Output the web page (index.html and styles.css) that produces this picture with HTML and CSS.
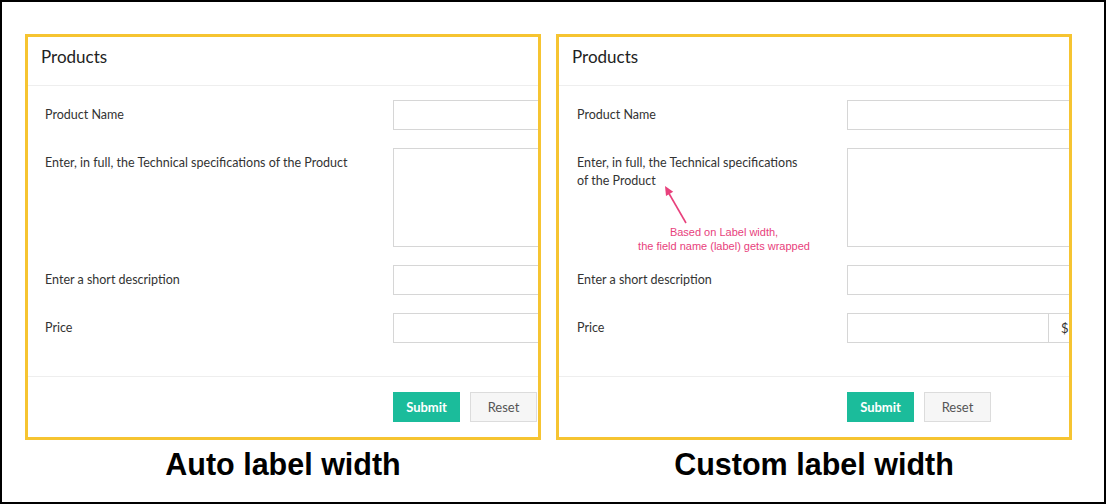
FILE: index.html
```html
<!DOCTYPE html>
<html>
<head>
<meta charset="utf-8">
<link rel="stylesheet" href="styles.css">
</head>
<body>
<div class="frame">
  <div class="column">
    <div class="panel">
      <div class="panel-head">Products</div>
      <div class="panel-body auto">
        <div class="row">
          <div class="label">Product Name</div>
          <div class="field"><div class="input"></div></div>
        </div>
        <div class="row">
          <div class="label">Enter, in full, the Technical specifications of the Product</div>
          <div class="field"><div class="input textarea"></div></div>
        </div>
        <div class="row">
          <div class="label">Enter a short description</div>
          <div class="field"><div class="input"></div></div>
        </div>
        <div class="row">
          <div class="label">Price</div>
          <div class="field"><div class="input"></div></div>
        </div>
      </div>
      <div class="panel-foot auto">
        <button class="btn submit">Submit</button>
        <button class="btn reset">Reset</button>
      </div>
    </div>
    <div class="caption">Auto label width</div>
  </div>

  <div class="column">
    <div class="panel">
      <div class="panel-head">Products</div>
      <div class="panel-body custom">
        <div class="row">
          <div class="label">Product Name</div>
          <div class="field"><div class="input"></div></div>
        </div>
        <div class="row">
          <div class="label">Enter, in full, the Technical specifications of the Product</div>
          <div class="field"><div class="input textarea"></div></div>
        </div>
        <div class="row">
          <div class="label">Enter a short description</div>
          <div class="field"><div class="input"></div></div>
        </div>
        <div class="row">
          <div class="label">Price</div>
          <div class="field">
            <div class="group">
              <div class="input price"></div>
              <div class="addon">$</div>
            </div>
          </div>
        </div>
      </div>
      <div class="panel-foot custom">
        <button class="btn submit">Submit</button>
        <button class="btn reset">Reset</button>
      </div>
      <svg class="arrow" width="40" height="50" viewBox="0 0 40 50">
        <line x1="33" y1="44" x2="16" y2="14.5" stroke="#e8417c" stroke-width="1.6"/>
        <polygon points="12,7 20.2,12.7 13,17" fill="#e8417c"/>
      </svg>
      <div class="note">Based on Label width,<br>the field name (label) gets wrapped</div>
    </div>
    <div class="caption">Custom label width</div>
  </div>
</div>
</body>
</html>
```

FILE: styles.css
```css
* { box-sizing: border-box; }
html, body { margin: 0; padding: 0; background: #fff; }
body { font-family: "Lato", "Liberation Sans", sans-serif; color: #333; }

.frame {
  width: 1106px;
  height: 504px;
  border: 2px solid #000;
  display: flex;
  gap: 15px;
  padding: 32px 0 0 23px;
}

.column {
  display: flex;
  flex-direction: column;
  align-items: center;
}

.panel {
  position: relative;
  width: 516px;
  height: 406px;
  border: 3px solid #f6c431;
  overflow: hidden;
  background: #fff;
}

.panel-head {
  height: 49px;
  padding: 10px 13px 0;
  font-size: 17px;
  line-height: 20px;
  color: #222;
  border-bottom: 1px solid #eeeeee;
}

.panel-body {
  padding: 14px 0 33px;
  display: flex;
  flex-direction: column;
  gap: 18px;
}
.panel-body.auto { padding-left: 17px; }
.panel-body.custom { padding-left: 18px; }

.row { display: flex; align-items: flex-start; }

.label {
  flex: none;
  font-size: 12.5px;
  line-height: 18px;
  padding-top: 5.5px;
  color: #333;
}
.auto .label { width: 348px; }
.custom .label { width: 270px; padding-right: 38px; }

.field { flex: none; width: 330px; }

.input {
  height: 30px;
  border: 1px solid #d6d6d6;
  background: #fff;
}
.input.textarea { height: 99px; }

.group { display: flex; }
.input.price { width: 202px; flex: none; }
.addon {
  flex: none;
  height: 30px;
  width: 40px;
  border: 1px solid #d6d6d6;
  border-left: none;
  background: #fff;
  font-size: 13px;
  line-height: 28px;
  padding-left: 12px;
  color: #333;
}

.panel-foot {
  border-top: 1px solid #eeeeee;
  padding-top: 15px;
  display: flex;
  gap: 10px;
}
.panel-foot.auto { padding-left: 365px; }
.panel-foot.custom { padding-left: 288px; }

.btn {
  width: 67px;
  height: 30px;
  font-family: "Lato", "Liberation Sans", sans-serif;
  font-size: 13px;
  padding: 0;
  cursor: pointer;
}
.submit {
  background: #1bbc9b;
  border: 1px solid #1bbc9b;
  color: #fff;
  font-weight: 700;
}
.reset {
  background: #f6f6f6;
  border: 1px solid #dcdcdc;
  color: #555;
}

.arrow {
  position: absolute;
  left: 94px;
  top: 142px;
}

.note {
  position: absolute;
  left: 65px;
  top: 189px;
  width: 200px;
  text-align: center;
  font-size: 11px;
  line-height: 13.5px;
  color: #e8417c;
  font-family: "Liberation Sans", sans-serif;
}

.caption {
  margin-top: 6px;
  font-family: "Liberation Sans", Arial, sans-serif;
  font-weight: 700;
  font-size: 30.5px;
  line-height: 36px;
  color: #000;
}
```
